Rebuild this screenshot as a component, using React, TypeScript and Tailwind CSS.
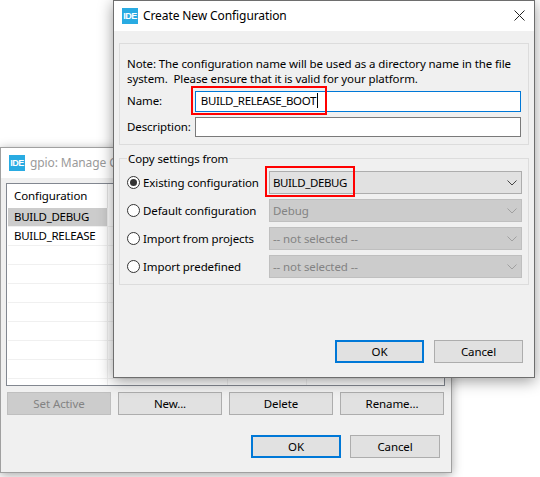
import React from "react";

const Chevron = ({ c }: { c: string }) => (
  <svg width="10" height="6" viewBox="0 0 10 6" fill="none" stroke={c} strokeWidth="1">
    <path d="M0.5 0.5 L5 5 L9.5 0.5" />
  </svg>
);

const Logo = () => (
  <div className="w-4 h-4 bg-[#29abe2] text-white text-[9px] font-bold leading-4 text-center shrink-0 font-['Liberation_Sans',sans-serif] tracking-[-0.5px]">IDE</div>
);

const Btn = ({ label, primary, disabled, w }: { label: string; primary?: boolean; disabled?: boolean; w: string }) => (
  <div
    className={`${w} h-[23px] flex items-center justify-center ${
      primary
        ? "border-2 border-[#0078d7] bg-[#e1e1e1] text-black"
        : disabled
        ? "border border-[#bfbfbf] bg-[#cccccc] text-[#838383]"
        : "border border-[#adadad] bg-[#e1e1e1] text-black"
    }`}
  >
    {label}
  </div>
);

const Radio = ({ checked, label }: { checked?: boolean; label: string }) => (
  <div className="flex items-center w-[142px] gap-[3px]">
    <div className="w-[13px] h-[13px] rounded-full border border-[#333333] bg-white flex items-center justify-center shrink-0">
      {checked && <div className="w-[7px] h-[7px] rounded-full bg-[#333333]" />}
    </div>
    <span className="text-black">{label}</span>
  </div>
);

const Combo = ({ value, enabled, caps }: { value: string; enabled?: boolean; caps?: boolean }) => (
  <div
    className={`w-[253px] h-[23px] flex items-center justify-between pl-[3px] pr-[4px] border ${
      enabled ? "border-[#adadad] bg-[#e1e1e1] text-black" : "border-[#bfbfbf] bg-[#cccccc] text-[#838383]"
    }`}
  >
    <span className={caps ? "tracking-[-0.4px]" : ""}>{value}</span>
    <Chevron c={enabled ? "#444444" : "#a0a0a0"} />
  </div>
);

const Row = ({ label, sel }: { label?: string; sel?: boolean }) => (
  <div className="h-[19px] flex shrink-0 border-b border-[#f0f0f0] text-black">
    <div className={`w-[100px] pl-[6px] leading-[18px] tracking-[-0.3px] border-r border-[#f0f0f0] ${sel ? "bg-[#cccccc]" : ""}`}>{label}</div>
    <div className="w-[120px] border-r border-[#f0f0f0]" />
    <div className="w-[79px] border-r border-[#f0f0f0]" />
    <div className="flex-1" />
  </div>
);

export default function App() {
  return (
    <div className="relative w-[540px] h-[477px] bg-white overflow-hidden text-[11.5px] tracking-[-0.1px] font-['Noto_Sans',sans-serif]">
      {/* Back window */}
      <div className="absolute left-0 top-[147px] w-[452px] h-[326px] bg-[#f0f0f0] border border-[#a0a0a0] shadow-[0_2px_10px_rgba(0,0,0,0.35)] flex flex-col">
        <div className="h-[30px] bg-white flex items-center pl-[8px] gap-[5px] shrink-0">
          <Logo />
          <span className="text-[#9a9a9a] text-[12px]">gpio: Manage Configurations</span>
        </div>
        <div className="ml-[5px] mr-[6px] mt-[5px] h-[203px] border border-[#828790] bg-white px-[1px] flex flex-col overflow-hidden">
          <div className="h-[24px] flex shrink-0 text-black">
            <div className="w-[100px] pl-[6px] leading-[24px] border-r border-[#e5e5e5]">Configuration</div>
          </div>
          <Row label="BUILD_DEBUG" sel />
          <Row label="BUILD_RELEASE" />
          <Row />
          <Row />
          <Row />
          <Row />
          <Row />
          <Row />
          <Row />
          <Row />
        </div>
        <div className="flex ml-[6px] mt-[6px] gap-[7px]">
          <Btn label="Set Active" disabled w="w-[104px]" />
          <Btn label="New..." w="w-[104px]" />
          <Btn label="Delete" w="w-[104px]" />
          <Btn label="Rename..." w="w-[104px]" />
        </div>
        <div className="flex justify-end gap-[9px] mr-[11px] mt-[20px]">
          <Btn label="OK" primary w="w-[90px]" />
          <Btn label="Cancel" w="w-[90px]" />
        </div>
      </div>

      {/* Front window */}
      <div className="absolute left-[113px] top-0 w-[422px] h-[378px] bg-[#f0f0f0] border border-[#6e6e6e] shadow-[0_3px_14px_rgba(0,0,0,0.4)] flex flex-col">
        <div className="h-[30px] bg-white flex items-center pl-[8px] gap-[5px] shrink-0 relative">
          <Logo />
          <span className="text-black text-[12px]">Create New Configuration</span>
          <svg className="absolute right-[9px] top-[9px]" width="11" height="11" viewBox="0 0 11 11" stroke="#222222" strokeWidth="1">
            <path d="M0.5 0.5 L10.5 10.5 M10.5 0.5 L0.5 10.5" />
          </svg>
        </div>
        <div className="mx-[5px] mt-[12px] h-[102px] shrink-0 border border-[#dcdcdc] px-[7px] pt-[12px]">
          <div className="leading-[15px] text-black whitespace-nowrap">
            <div>Note: The configuration name will be used as a directory name in the file</div>
            <div className="whitespace-pre">system.  Please ensure that it is valid for your platform.</div>
          </div>
          <div className="flex items-center mt-[5px] h-[21px]">
            <span className="w-[68px] text-black pb-[1px]">Name:</span>
            <div className="relative w-[327px] h-[21px] border border-[#0078d7] bg-white pl-[5px] leading-[18px] text-black">
              <span className="border-r border-black pr-[1px] tracking-[-0.38px]">BUILD_RELEASE_BOOT</span>
              <div className="absolute left-[-5px] top-[-6px] w-[136px] h-[29px] border-[2px] border-[#ff0000]" />
            </div>
          </div>
          <div className="flex items-center mt-[5px] h-[20px]">
            <span className="w-[68px] text-black">Description:</span>
            <div className="w-[327px] h-[20px] border border-[#7a7a7a] bg-white" />
          </div>
        </div>
        <div className="relative mx-[5px] mt-[13px] h-[127px] shrink-0 border border-[#dcdcdc] pl-[7px] pt-[12px] flex flex-col gap-[5px]">
          <div className="absolute left-[7px] top-[-8px] bg-[#f0f0f0] px-[1px] leading-[15px] text-black">Copy settings from</div>
          <div className="relative flex items-center">
            <Radio checked label="Existing configuration" />
            <Combo value="BUILD_DEBUG" enabled caps />
            <div className="absolute left-[138px] top-[-5px] w-[90px] h-[31px] border-[2px] border-[#ff0000]" />
          </div>
          <div className="flex items-center">
            <Radio label="Default configuration" />
            <Combo value="Debug" />
          </div>
          <div className="flex items-center">
            <Radio label="Import from projects" />
            <Combo value="-- not selected --" />
          </div>
          <div className="flex items-center">
            <Radio label="Import predefined" />
            <Combo value="-- not selected --" />
          </div>
        </div>
        <div className="flex justify-end gap-[10px] mr-[11px] mt-[55px]">
          <Btn label="OK" primary w="w-[89px]" />
          <Btn label="Cancel" w="w-[89px]" />
        </div>
      </div>
    </div>
  );
}
